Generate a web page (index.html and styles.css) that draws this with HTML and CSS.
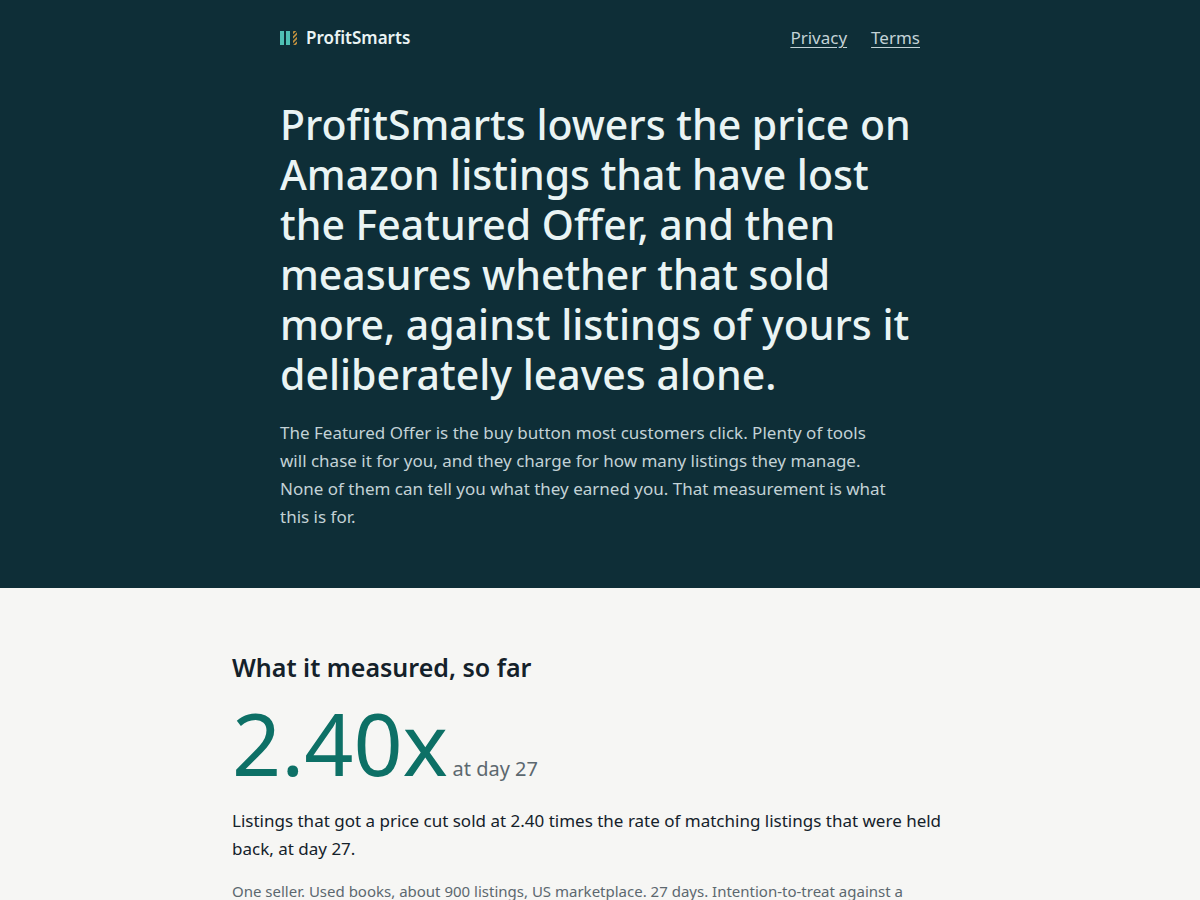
FILE: index.html
```html
<!DOCTYPE html>
<html lang="en">
<head>
  <meta charset="UTF-8">
  <meta name="viewport" content="width=device-width, initial-scale=1.0">
  <title>ProfitSmarts</title>
  <link rel="stylesheet" href="styles.css">
</head>
<body>
  <header class="hero">
    <div class="hero-inner">
      <div class="topbar">
        <div class="brand">
          <svg class="mark" viewBox="0 0 17 14" width="17" height="14" aria-hidden="true">
            <defs>
              <clipPath id="third-bar">
                <rect x="13" y="0" width="4" height="14"/>
              </clipPath>
            </defs>
            <rect x="0" y="0" width="4" height="14" fill="#4fc0b4"/>
            <rect x="6" y="0" width="4" height="14" fill="#4fc0b4"/>
            <path clip-path="url(#third-bar)" d="M12 3l6-6M12 7.5l6-6M12 12l6-6M12 16.500l6-6" stroke="#c0903f" stroke-width="1.9" fill="none"/>
          </svg>
          <span>ProfitSmarts</span>
        </div>
        <nav class="links">
          <a href="#privacy">Privacy</a>
          <a href="#terms">Terms</a>
        </nav>
      </div>
      <h1>ProfitSmarts lowers the price on Amazon listings that have lost the Featured Offer, and then measures whether that sold more, against listings of yours it deliberately leaves alone.</h1>
      <p class="lede">The Featured Offer is the buy button most customers click. Plenty of tools will chase it for you, and they charge for how many listings they manage. None of them can tell you what they earned you. That measurement is what this is for.</p>
    </div>
  </header>

  <main class="content">
    <h2>What it measured, so far</h2>
    <p class="result"><span class="figure">2.40x</span> <span class="when">at day 27</span></p>
    <p class="summary">Listings that got a price cut sold at 2.40 times the rate of matching listings that were held back, at day 27.</p>
    <p class="note">One seller. Used books, about 900 listings, US marketplace. 27 days. Intention-to-treat against a</p>
  </main>
</body>
</html>
```
FILE: styles.css
```css
* {
  box-sizing: border-box;
}

body {
  margin: 0;
  font-family: "Noto Sans", sans-serif;
  font-size: 17px;
  line-height: 28px;
  background: #f6f6f4;
  color: #14212a;
}

h1,
h2,
p {
  margin: 0;
}

.hero {
  background: #0e2e37;
  color: #eaf4f4;
  padding: 24px 24px 57px;
}

.hero-inner {
  max-width: 640px;
  margin: 0 auto;
}

.topbar {
  display: flex;
  justify-content: space-between;
  align-items: center;
  margin-bottom: 47px;
}

.brand {
  display: flex;
  align-items: center;
  gap: 9px;
  font-weight: 600;
}

.links {
  display: flex;
  gap: 24px;
}

.links a {
  color: #c3d2d6;
  text-underline-offset: 3px;
}

h1 {
  font-size: 41px;
  line-height: 50px;
  font-weight: 500;
  margin-bottom: 20px;
}

.lede {
  max-width: 608px;
  color: #c3d2d6;
}

.content {
  max-width: 784px;
  margin: 0 auto;
  padding: 63px 24px;
}

h2 {
  font-size: 25px;
  line-height: 32px;
  font-weight: 600;
  margin-bottom: 16px;
}

.result {
  margin-bottom: 20px;
}

.figure {
  font-size: 86px;
  line-height: 88px;
  color: #0d7066;
}

.when {
  font-size: 20px;
  color: #5c686f;
}

.summary {
  margin-bottom: 16px;
}

.note {
  font-size: 15px;
  line-height: 25px;
  color: #5c686f;
}
```
